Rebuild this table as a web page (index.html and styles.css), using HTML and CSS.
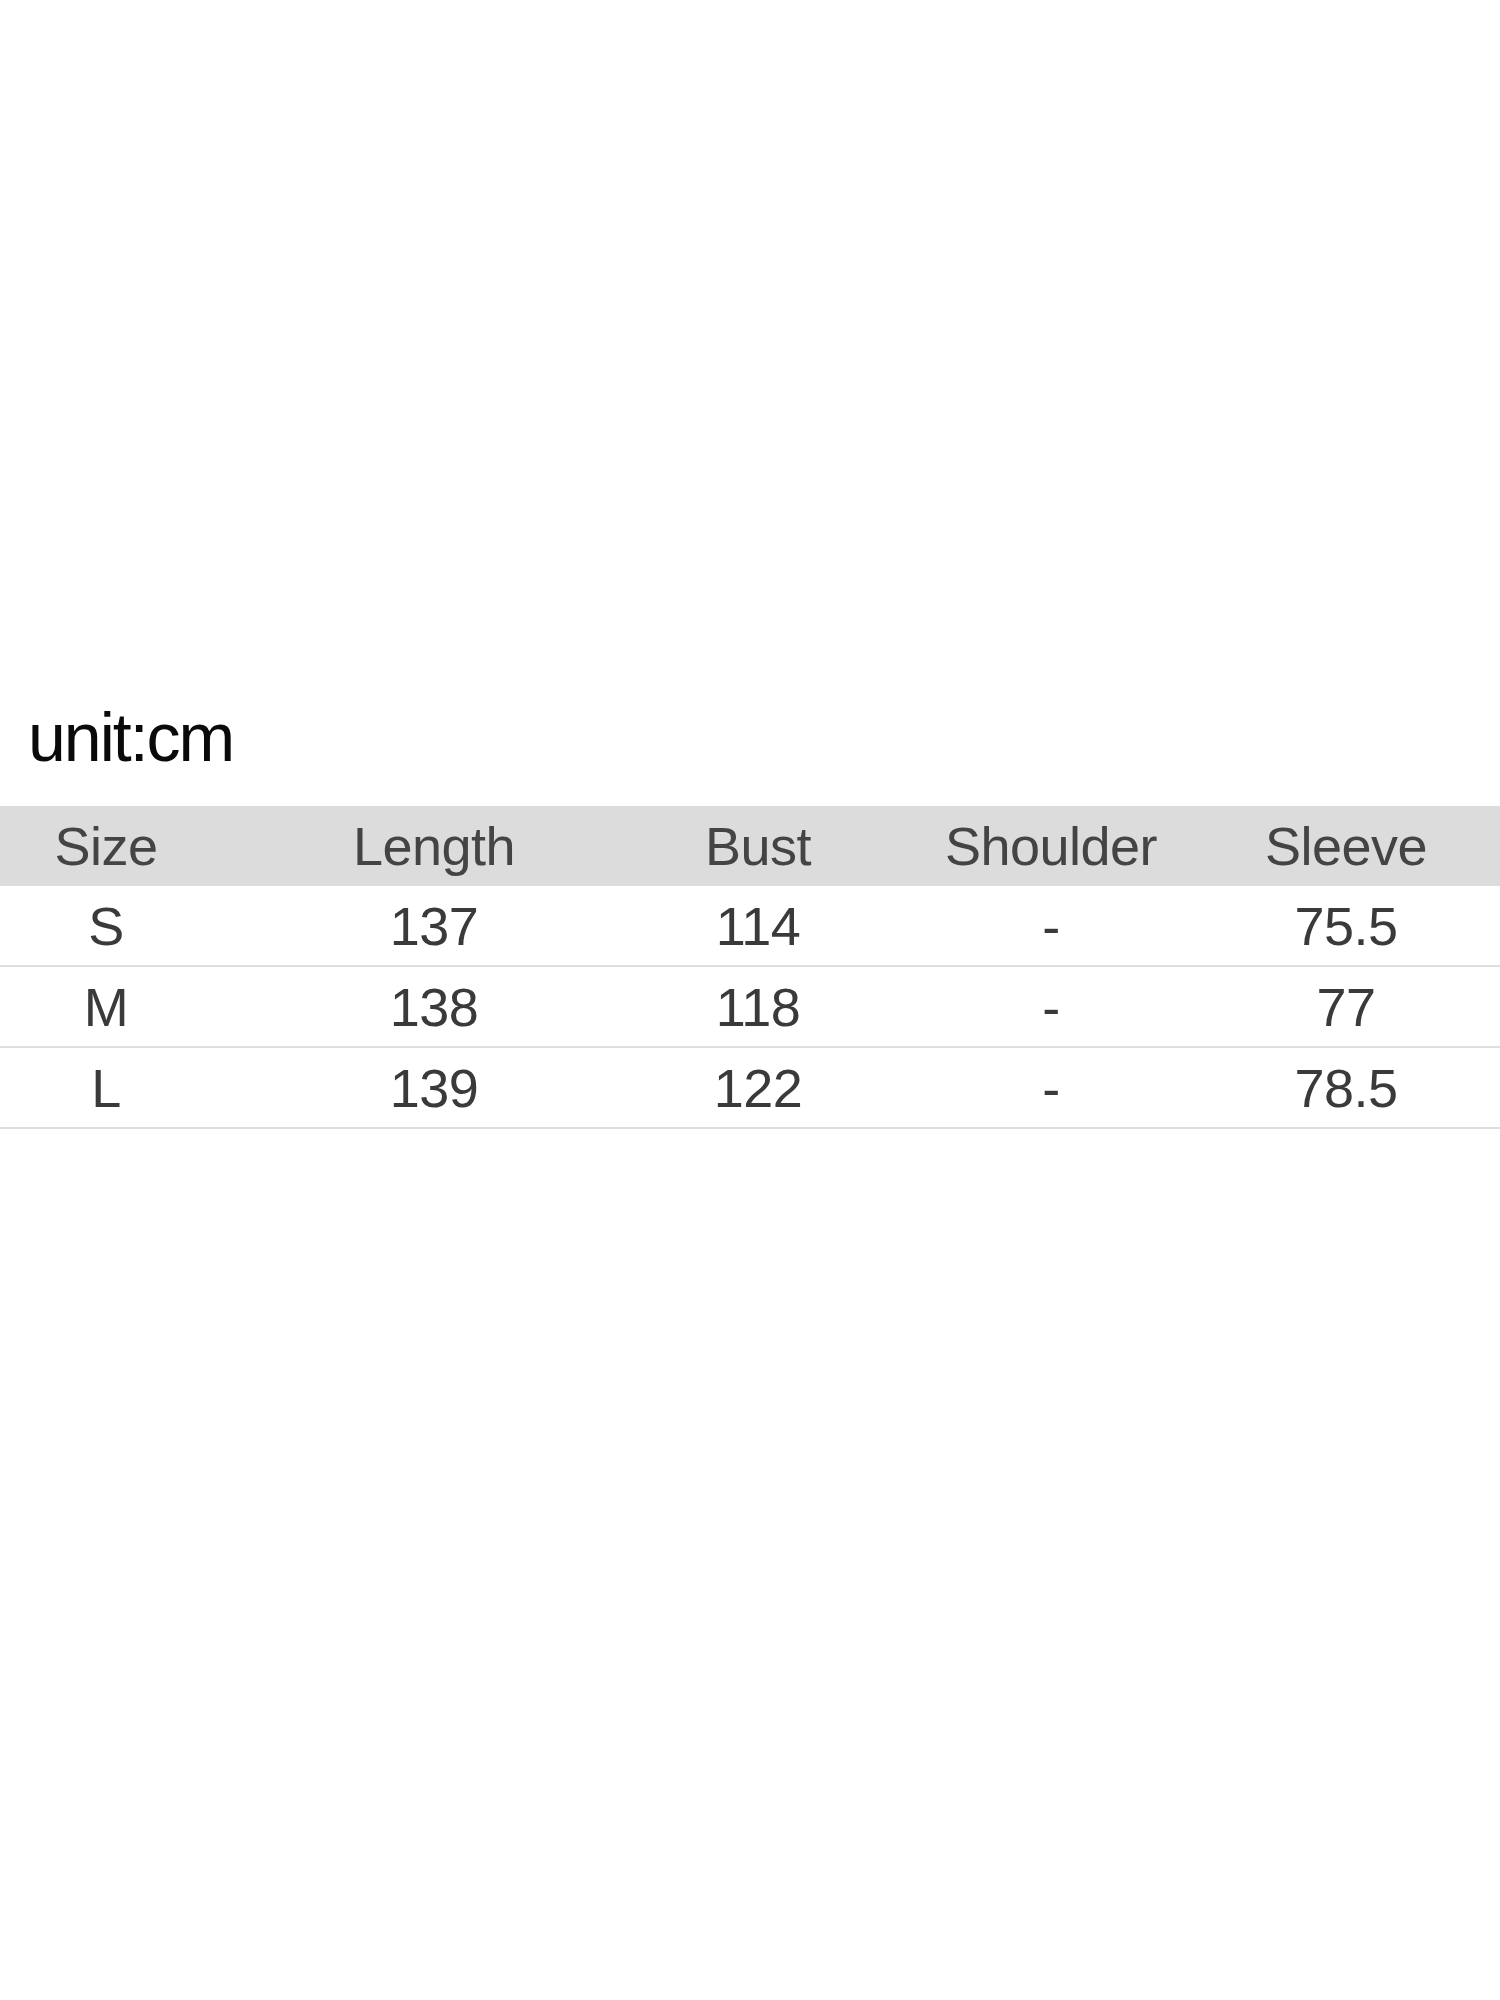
FILE: index.html
```html
<!DOCTYPE html>
<html lang="en">
<head>
<meta charset="utf-8">
<title>Size chart</title>
<link rel="stylesheet" href="styles.css">
</head>
<body>
<main class="sheet">
  <h2 class="unit">unit:cm</h2>
  <div class="size-table">
    <div class="row head">
      <span class="cell">Size</span>
      <span class="cell">Length</span>
      <span class="cell">Bust</span>
      <span class="cell">Shoulder</span>
      <span class="cell">Sleeve</span>
      <span class="cell"></span>
    </div>
    <div class="row">
      <span class="cell">S</span>
      <span class="cell">137</span>
      <span class="cell">114</span>
      <span class="cell">-</span>
      <span class="cell">75.5</span>
      <span class="cell"></span>
    </div>
    <div class="row">
      <span class="cell">M</span>
      <span class="cell">138</span>
      <span class="cell">118</span>
      <span class="cell">-</span>
      <span class="cell">77</span>
      <span class="cell"></span>
    </div>
    <div class="row">
      <span class="cell">L</span>
      <span class="cell">139</span>
      <span class="cell">122</span>
      <span class="cell">-</span>
      <span class="cell">78.5</span>
      <span class="cell"></span>
    </div>
  </div>
</main>
</body>
</html>
```
FILE: styles.css
```css
html, body {
  margin: 0;
  padding: 0;
  background: #ffffff;
}

.sheet {
  width: 1500px;
  height: 2000px;
  padding-top: 700px;
  box-sizing: border-box;
}

.unit {
  margin: 0 0 31px 0;
  padding-left: 28px;
  font-family: "Liberation Sans", Arial, sans-serif;
  font-weight: 400;
  font-size: 68px;
  line-height: 75px;
  letter-spacing: -2px;
  color: #0a0a0a;
}

.size-table {
  width: 1500px;
}

.row {
  display: grid;
  grid-template-columns: 212px 444px 204px 382px 208px 1fr;
  align-items: center;
  height: 79px;
  border-bottom: 2px solid #dedede;
  font-family: "Liberation Sans", Arial, sans-serif;
  font-size: 54px;
  line-height: 1;
  letter-spacing: -0.5px;
  color: #3a3a3a;
}

.row.head {
  height: 80px;
  border-bottom: 0;
  background: #dcdcdc;
  color: #444444;
}

.cell {
  text-align: center;
}
```
